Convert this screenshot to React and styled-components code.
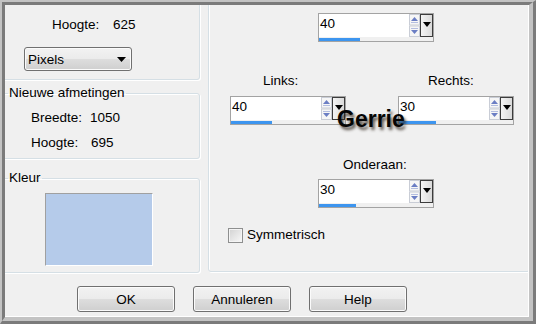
import React from 'react'
import styled, { createGlobalStyle } from 'styled-components'

const GlobalStyle = createGlobalStyle`
html, body {
  margin: 0;
  padding: 0;
  background: #fff;
}
body {
  font-family: "Liberation Sans", Arial, sans-serif;
  font-size: 13.5px;
  color: #000;
}
`

const Frame = styled.div`
position: relative;
width: 536px;
height: 324px;
box-sizing: border-box;
border-top: 2px solid #c3c3c3;
border-left: 2px solid #c3c3c3;
border-right: 3px solid #7b7b7b;
border-bottom: 3px solid #7b7b7b;
`
const Window = styled.div`
height: 100%;
box-sizing: border-box;
border-top: 3px solid #7b7b7b;
border-left: 3px solid #7b7b7b;
border-right: 4px solid #c3c3c3;
border-bottom: 4px solid #c3c3c3;
`
const Dialog = styled.div`
height: 100%;
box-sizing: border-box;
border-right: 1px solid #fff;
border-bottom: 1px solid #fff;
background: #f0f0f0;
overflow: hidden;
display: flex;
flex-direction: column;
`
const Main = styled.div`
display: flex;
align-items: flex-start;
height: 268px;
flex: none;
`
const LeftCol = styled.div`
width: 195px;
flex: none;
display: flex;
flex-direction: column;
`
const Group = styled.fieldset`
width: 199px;
box-sizing: border-box;
min-inline-size: 0;
margin: ${p => p.$top}px 0 0 -4px;
padding: ${p => p.$pad};
border: 1px solid #d5dfe5;
border-radius: 3px;
box-shadow: inset 1px 1px 0 #fff, 1px 1px 0 #fff;
display: flex;
flex-direction: column;
align-items: flex-start;
`
const Legend = styled.legend`
margin-left: 6px;
padding: 0 1px;
line-height: 16px;
`
const InfoRow = styled.div`
display: grid;
grid-template-columns: ${p => p.$labelWidth}px auto;
padding-left: ${p => p.$indent}px;
line-height: 16px;
margin-bottom: ${p => p.$after || 0}px;
`
const Select = styled.div`
width: 108px;
height: 24px;
box-sizing: border-box;
margin: 14px 0 0 22px;
padding: 0 5px 0 3px;
border: 1px solid #707070;
border-radius: 3px;
box-shadow: inset 0 0 0 1px #fbfbfb;
background: linear-gradient(#f2f2f2 0%, #ebebeb 48%, #dddddd 52%, #cfcfcf 100%);
display: flex;
align-items: center;
justify-content: space-between;
`
const Swatch = styled.div`
width: 108px;
height: 73px;
box-sizing: border-box;
margin-left: 43px;
border-top: 1px solid #a0a0a0;
border-left: 1px solid #a0a0a0;
border-right: 1px solid #fff;
border-bottom: 1px solid #fff;
background: #b5cbea;
`
const Panel = styled.div`
flex: 1;
height: 277px;
box-sizing: border-box;
margin: -10px -2px 0 8px;
padding-top: 17px;
border: 1px solid #d5dfe5;
border-radius: 3px;
box-shadow: inset 1px 1px 0 #fff, 1px 1px 0 #fff;
display: flex;
flex-direction: column;
align-items: flex-start;
`
const SpinRow = styled.div`
display: flex;
gap: 52px;
padding-left: 21px;
margin-top: ${p => p.$top}px;
`
const Field = styled.div`
display: flex;
flex-direction: column;
margin: ${p => p.$top || 0}px 0 0 ${p => p.$left || 0}px;
`
const FieldLabel = styled.div`
line-height: 16px;
padding-left: ${p => p.$offset}px;
margin-bottom: ${p => p.$gap}px;
`
const SpinFrame = styled.div`
width: 116px;
height: 29px;
box-sizing: border-box;
border: 1px solid #a3a3a3;
background: #f0f0f0;
display: flex;
flex-direction: column;
`
const SpinTop = styled.div`
display: flex;
height: 23px;
background: #fff;
`
const SpinValue = styled.div`
flex: 1;
padding: 2px 0 0 1px;
line-height: 16px;
`
const SpinArrows = styled.div`
width: 11px;
display: flex;
`
const DropBtn = styled.div`
width: 13px;
box-sizing: border-box;
border: 1px solid #3c3c3c;
background: linear-gradient(90deg, #f4f4f4, #dadada);
display: flex;
justify-content: center;
padding-top: 7px;
`
const BarTrack = styled.div`
flex: 1;
display: flex;
align-items: flex-end;
`
const BarFill = styled.div`
width: ${p => p.$width}px;
height: 3px;
background: #3d95ef;
`
const CheckRow = styled.label`
display: flex;
align-items: center;
gap: 4px;
margin: 19px 0 0 19px;
line-height: 16px;
`
const CheckBox = styled.span`
width: 15px;
height: 15px;
box-sizing: border-box;
border: 1px solid #8e8f8f;
background: linear-gradient(135deg, #d2d2d2, #f8f8f8);
box-shadow: inset 0 0 0 1px #f4f4f4;
`
const ButtonBar = styled.div`
display: flex;
gap: 18px;
padding: 13px 0 0 72px;
`
const Button = styled.button`
width: 98px;
height: 26px;
box-sizing: border-box;
border: 1px solid #707070;
border-radius: 3px;
box-shadow: inset 0 0 0 1px #fbfbfb;
background: linear-gradient(#f2f2f2 0%, #ebebeb 48%, #dddddd 52%, #cfcfcf 100%);
font: inherit;
color: #000;
padding: 0;
`
const Watermark = styled.div`
position: absolute;
left: 335px;
top: 106px;
font-family: "Liberation Sans", Arial, sans-serif;
font-weight: bold;
font-size: 23px;
line-height: 23px;
color: #050505;
text-shadow: 2px 3px 3px rgba(40, 30, 20, 0.75);
pointer-events: none;
`

const Arrows = () => (
  <svg width="11" height="23" viewBox="0 0 11 23">
    <rect x="0.5" y="0.5" width="10" height="10.5" fill="#f6f6f6" stroke="#c9cdd6" />
    <polygon points="2,7 5.5,3 9,7" fill="#6b7ec4" />
    <line x1="2" y1="8.5" x2="9" y2="8.5" stroke="#b3bde0" />
    <rect x="0.5" y="12" width="10" height="10.5" fill="#f6f6f6" stroke="#c9cdd6" />
    <line x1="2" y1="14.5" x2="9" y2="14.5" stroke="#b3bde0" />
    <polygon points="2,16 9,16 5.5,20" fill="#6b7ec4" />
  </svg>
)

const DownArrow = ({ w = 8, h = 5 }) => (
  <svg width={w} height={h} viewBox={`0 0 ${w} ${h}`}>
    <polygon points={`0,0 ${w},0 ${w / 2},${h}`} fill="#000" />
  </svg>
)

const SpinBox = ({ value, bar }) => (
  <SpinFrame>
    <SpinTop>
      <SpinValue>{value}</SpinValue>
      <SpinArrows>
        <Arrows />
      </SpinArrows>
      <DropBtn>
        <DownArrow w={8} h={5} />
      </DropBtn>
    </SpinTop>
    <BarTrack>
      <BarFill $width={bar} />
    </BarTrack>
  </SpinFrame>
)

const App = () => {
  return (
    <>
      <GlobalStyle />
      <Frame>
        <Window>
          <Dialog>
            <Main>
              <LeftCol>
                <Group $top={-10} $pad="21px 0 0 0" style={{ height: 85 }}>
                  <InfoRow $labelWidth={61} $indent={50}>
                    <span>Hoogte:</span>
                    <span>625</span>
                  </InfoRow>
                  <Select>
                    <span>Pixels</span>
                    <DownArrow w={9} h={5} />
                  </Select>
                </Group>
                <Group $top={5} $pad="9px 0 7px 0">
                  <Legend>Nieuwe afmetingen</Legend>
                  <InfoRow $labelWidth={59} $indent={29} $after={9}>
                    <span>Breedte:</span>
                    <span>1050</span>
                  </InfoRow>
                  <InfoRow $labelWidth={60} $indent={29}>
                    <span>Hoogte:</span>
                    <span>695</span>
                  </InfoRow>
                </Group>
                <Group $top={11} $pad="7px 0 6px 0">
                  <Legend>Kleur</Legend>
                  <Swatch />
                </Group>
              </LeftCol>
              <Panel>
                <Field $left={109}>
                  <SpinBox value="40" bar={41} />
                </Field>
                <SpinRow $top={31}>
                  <Field>
                    <FieldLabel $offset={33} $gap={7}>Links:</FieldLabel>
                    <SpinBox value="40" bar={41} />
                  </Field>
                  <Field>
                    <FieldLabel $offset={30} $gap={7}>Rechts:</FieldLabel>
                    <SpinBox value="30" bar={37} />
                  </Field>
                </SpinRow>
                <Field $top={32} $left={109}>
                  <FieldLabel $offset={25} $gap={6}>Onderaan:</FieldLabel>
                  <SpinBox value="30" bar={37} />
                </Field>
                <CheckRow>
                  <CheckBox />
                  Symmetrisch
                </CheckRow>
              </Panel>
            </Main>
            <ButtonBar>
              <Button>OK</Button>
              <Button>Annuleren</Button>
              <Button>Help</Button>
            </ButtonBar>
          </Dialog>
        </Window>
        <Watermark>Gerrie</Watermark>
      </Frame>
    </>
  )
}

export default App
